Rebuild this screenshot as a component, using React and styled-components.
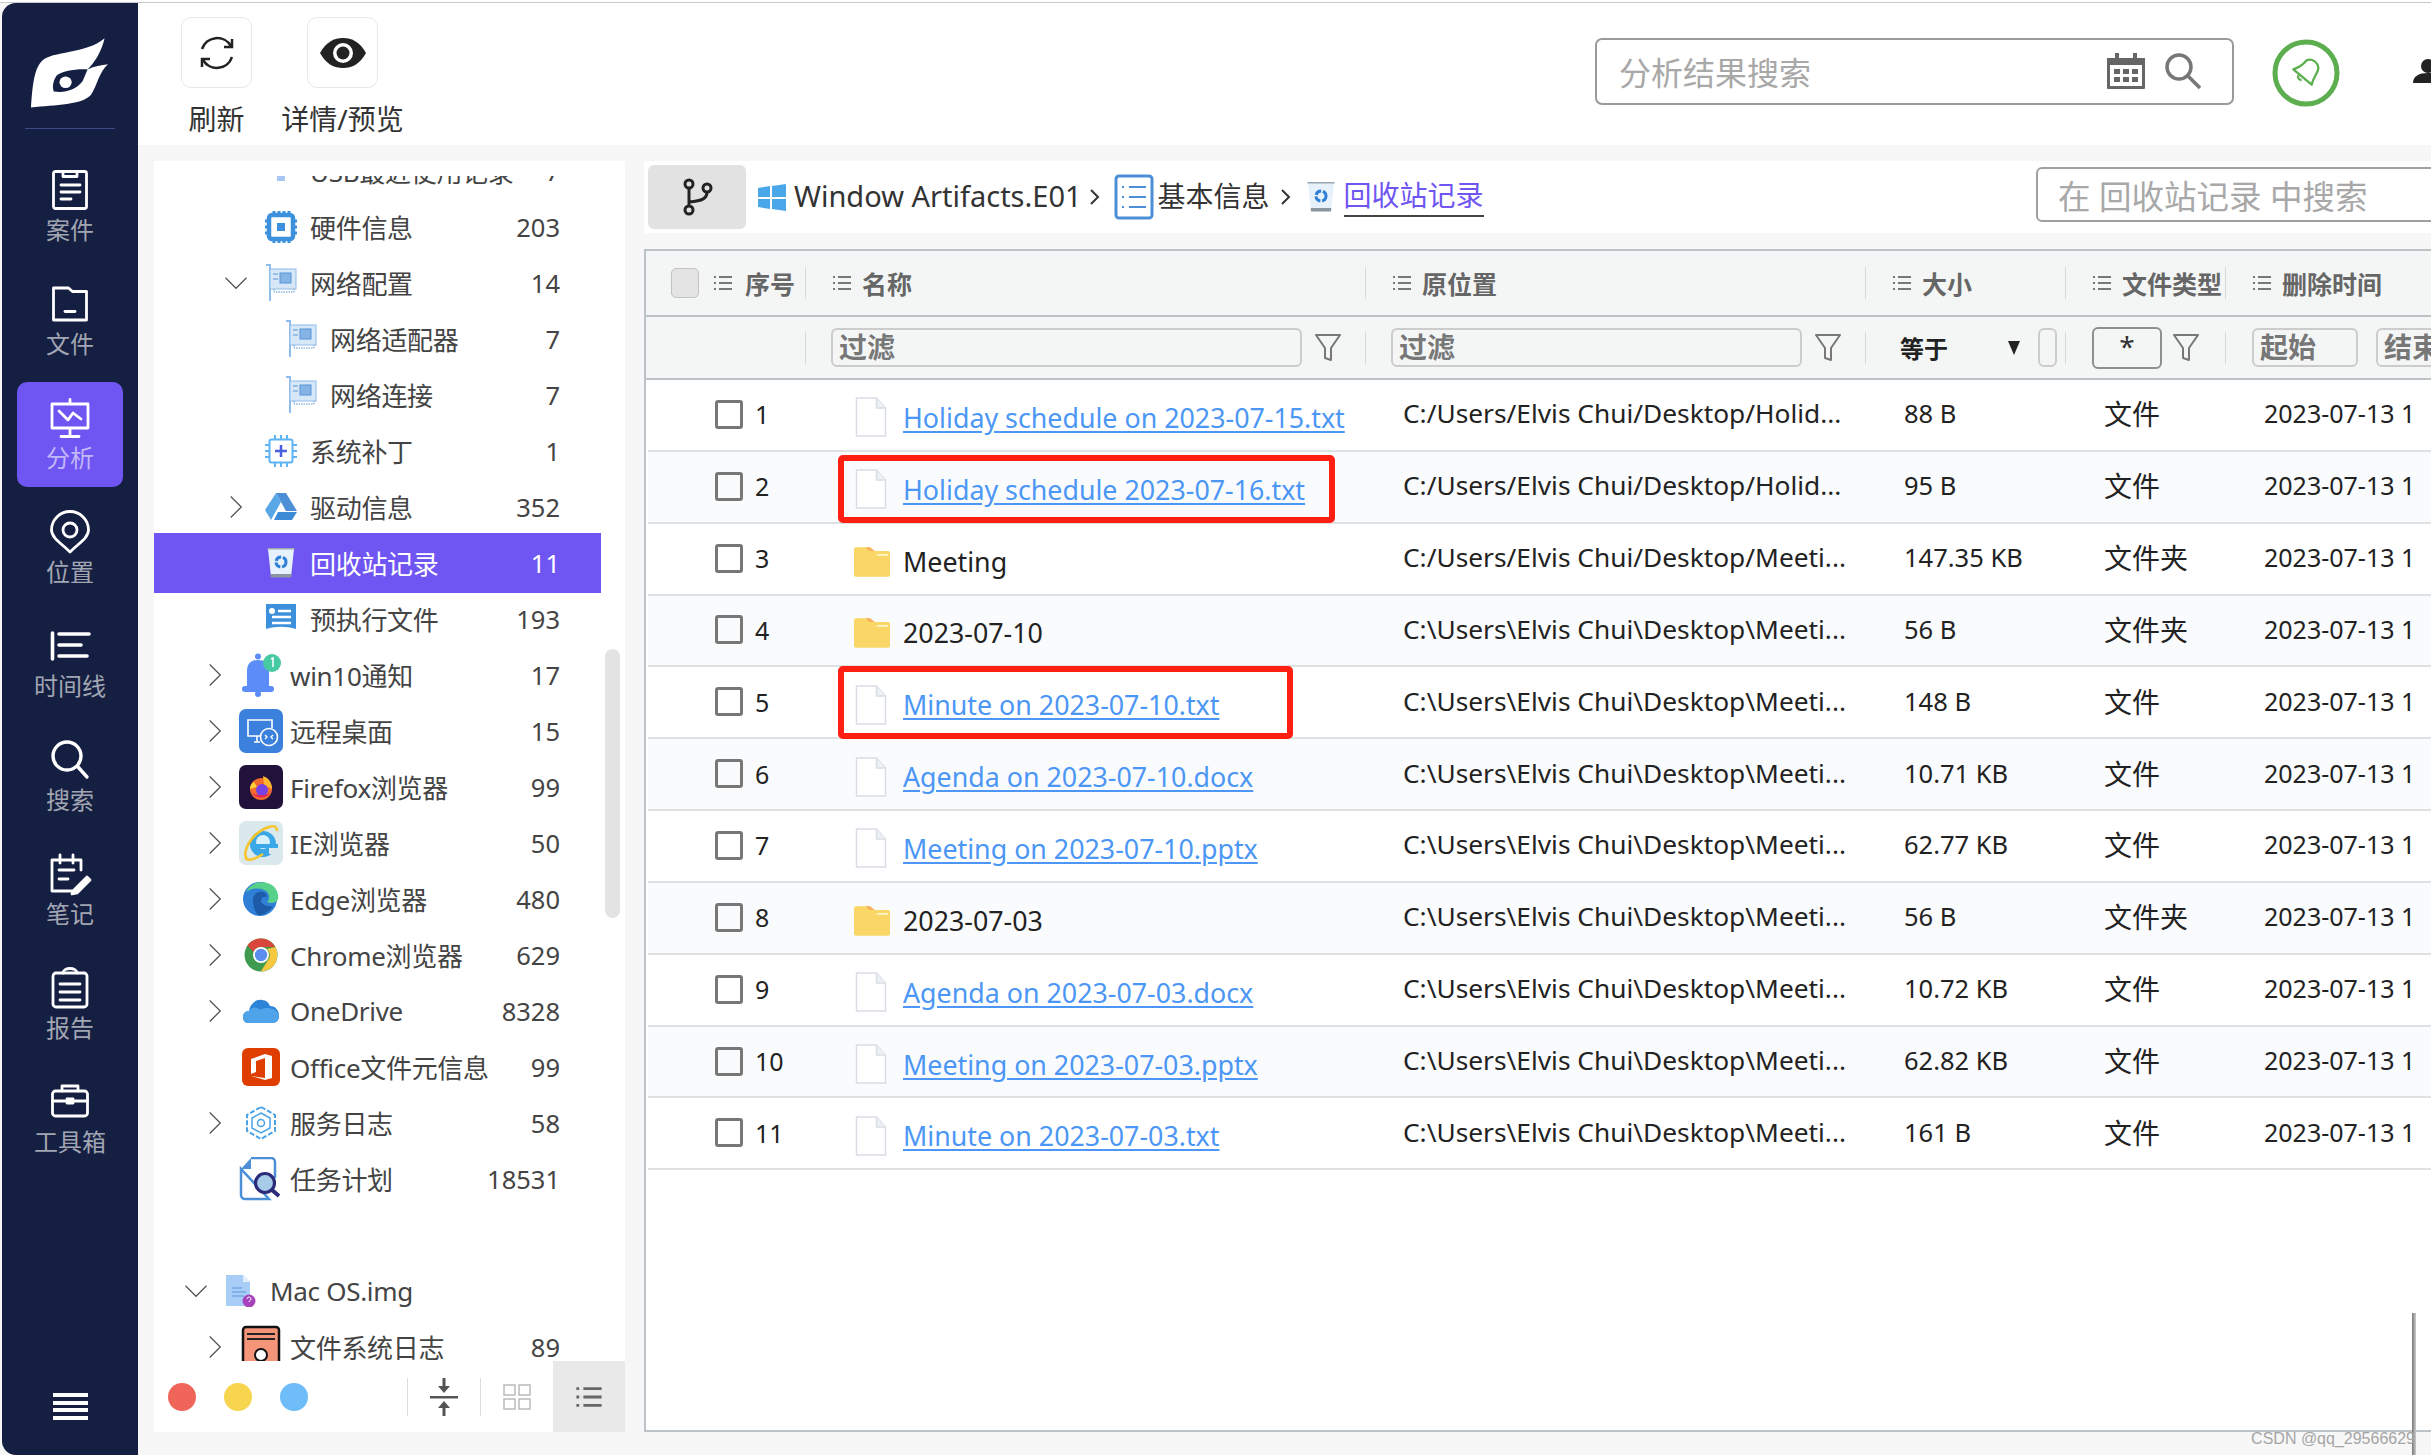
import styled, { createGlobalStyle } from 'styled-components'

const FONT = `"Noto Sans", "Noto Sans CJK SC", sans-serif`

const GlobalStyle = createGlobalStyle`
html, body {
  margin: 0;
  padding: 0;
  background: #f7f7f7;
  overflow: hidden;
}
* { box-sizing: border-box; }
`

const navItems = [
  { label: '案件', icon: 'case' },
  { label: '文件', icon: 'folder' },
  { label: '分析', icon: 'analysis', active: true },
  { label: '位置', icon: 'pin' },
  { label: '时间线', icon: 'timeline' },
  { label: '搜索', icon: 'search' },
  { label: '笔记', icon: 'note' },
  { label: '报告', icon: 'report' },
  { label: '工具箱', icon: 'toolbox' },
]

const treeItems = [
  { label: 'USB最近使用记录', count: 7, level: 2, icon: 'usb' },
  { label: '硬件信息', count: 203, level: 2, icon: 'chip' },
  { label: '网络配置', count: 14, level: 2, icon: 'nic', arrow: 'down' },
  { label: '网络适配器', count: 7, level: 3, icon: 'nic' },
  { label: '网络连接', count: 7, level: 3, icon: 'nic' },
  { label: '系统补丁', count: 1, level: 2, icon: 'patch' },
  { label: '驱动信息', count: 352, level: 2, icon: 'drive', arrow: 'right' },
  { label: '回收站记录', count: 11, level: 2, icon: 'bin', active: true },
  { label: '预执行文件', count: 193, level: 2, icon: 'prefetch' },
  { label: 'win10通知', count: 17, level: 1, icon: 'bell', arrow: 'right' },
  { label: '远程桌面', count: 15, level: 1, icon: 'remote', arrow: 'right' },
  { label: 'Firefox浏览器', count: 99, level: 1, icon: 'firefox', arrow: 'right' },
  { label: 'IE浏览器', count: 50, level: 1, icon: 'ie', arrow: 'right' },
  { label: 'Edge浏览器', count: 480, level: 1, icon: 'edge', arrow: 'right' },
  { label: 'Chrome浏览器', count: 629, level: 1, icon: 'chrome', arrow: 'right' },
  { label: 'OneDrive', count: 8328, level: 1, icon: 'onedrive', arrow: 'right' },
  { label: 'Office文件元信息', count: 99, level: 1, icon: 'office' },
  { label: '服务日志', count: 58, level: 1, icon: 'service', arrow: 'right' },
  { label: '任务计划', count: 18531, level: 1, icon: 'task' },
  { spacer: true },
  { label: 'Mac OS.img', level: 0, icon: 'image', arrow: 'down' },
  { label: '文件系统日志', count: 89, level: 1, icon: 'fslog', arrow: 'right' },
]

const files = [
  { no: 1, name: 'Holiday schedule on 2023-07-15.txt', path: 'C:/Users/Elvis Chui/Desktop/Holid...', size: '88 B', type: '文件', link: true },
  { no: 2, name: 'Holiday schedule 2023-07-16.txt', path: 'C:/Users/Elvis Chui/Desktop/Holid...', size: '95 B', type: '文件', link: true, mark: { width: 497, top: 3, bottom: -1 } },
  { no: 3, name: 'Meeting', path: 'C:/Users/Elvis Chui/Desktop/Meeti...', size: '147.35 KB', type: '文件夹' },
  { no: 4, name: '2023-07-10', path: 'C:\\Users\\Elvis Chui\\Desktop\\Meeti...', size: '56 B', type: '文件夹' },
  { no: 5, name: 'Minute on 2023-07-10.txt', path: 'C:\\Users\\Elvis Chui\\Desktop\\Meeti...', size: '148 B', type: '文件', link: true, mark: { width: 455, top: -1, bottom: -2 } },
  { no: 6, name: 'Agenda on 2023-07-10.docx', path: 'C:\\Users\\Elvis Chui\\Desktop\\Meeti...', size: '10.71 KB', type: '文件', link: true },
  { no: 7, name: 'Meeting on 2023-07-10.pptx', path: 'C:\\Users\\Elvis Chui\\Desktop\\Meeti...', size: '62.77 KB', type: '文件', link: true },
  { no: 8, name: '2023-07-03', path: 'C:\\Users\\Elvis Chui\\Desktop\\Meeti...', size: '56 B', type: '文件夹' },
  { no: 9, name: 'Agenda on 2023-07-03.docx', path: 'C:\\Users\\Elvis Chui\\Desktop\\Meeti...', size: '10.72 KB', type: '文件', link: true },
  { no: 10, name: 'Meeting on 2023-07-03.pptx', path: 'C:\\Users\\Elvis Chui\\Desktop\\Meeti...', size: '62.82 KB', type: '文件', link: true },
  { no: 11, name: 'Minute on 2023-07-03.txt', path: 'C:\\Users\\Elvis Chui\\Desktop\\Meeti...', size: '161 B', type: '文件', link: true },
]

const COLUMNS = '160px 560px 500px 200px 160px 400px'
const INDENT = { 0: 26, 1: 45, 2: 66, 3: 86 }

const Page = styled.div`
position: relative;
width: 2431px;
height: 1455px;
overflow: hidden;
background: #f7f7f7;
font-family: ${FONT};
display: flex;
flex-direction: column;
`
const TopEdge = styled.div`
height: 3px;
flex: none;
background: #c9c9c9;
border-top: 2px solid #fff;
`
const Body = styled.div`
flex: 1;
display: flex;
min-height: 0;
padding-left: 2px;
`
const Sidebar = styled.nav`
width: 136px;
flex: none;
background: #151f42;
border-radius: 14px 0 0 14px;
display: flex;
flex-direction: column;
align-items: center;
position: relative;
`
const LogoBox = styled.div`
width: 90px;
height: 126px;
flex: none;
padding-top: 35px;
border-bottom: 1px solid #3d4a86;
display: flex;
justify-content: center;
align-items: flex-start;
`
const NavList = styled.div`
display: flex;
flex-direction: column;
gap: 9px;
padding-top: 25px;
`
const NavItem = styled.div`
width: 106px;
height: 105px;
border-radius: 10px;
background: ${p => (p.$active ? '#6f55f2' : 'transparent')};
color: ${p => (p.$active ? '#c2b8f8' : '#a2a6b2')};
display: flex;
flex-direction: column;
align-items: center;
justify-content: center;
font-size: 24px;
line-height: 30px;
gap: 3px;
`
const MenuButton = styled.div`
position: absolute;
bottom: 35px;
left: 50%;
margin-left: -17px;
width: 35px;
height: 27px;
display: flex;
flex-direction: column;
justify-content: space-between;
`
const MenuBar = styled.span`
height: 4px;
background: #fff;
`
const Content = styled.div`
flex: 1;
min-width: 0;
display: flex;
flex-direction: column;
`
const Header = styled.header`
height: 142px;
flex: none;
background: #fff;
display: flex;
padding-left: 43px;
position: relative;
`
const ToolGroup = styled.div`
display: flex;
flex-direction: column;
align-items: center;
width: 71px;
margin-left: ${p => p.$left || 0}px;
padding-top: 14px;
font-size: 28px;
line-height: 40px;
color: #333;
gap: 11px;
white-space: nowrap;
`
const ToolButton = styled.div`
width: 71px;
height: 71px;
border: 1px solid #e8e8e8;
border-radius: 10px;
display: flex;
align-items: center;
justify-content: center;
`
const HeaderRight = styled.div`
margin-left: auto;
display: flex;
align-items: center;
height: 136px;
gap: 38px;
width: 836px;
flex: none;
overflow: hidden;
`
const GlobalSearch = styled.div`
width: 639px;
height: 67px;
flex: none;
border: 2px solid #9a9a9a;
border-radius: 7px;
display: flex;
align-items: center;
padding: 0 30px 0 22px;
font-size: 32px;
color: #a8a8a8;
`
const SearchText = styled.span`
flex: 1;
`
const BellBadge = styled.span`
display: flex;
flex: none;
margin-top: 4px;
`
const UserGlyph = styled.span`
display: flex;
flex: none;
margin-left: 35px;
`
const Main = styled.div`
flex: 1;
min-height: 0;
display: flex;
padding: 16px 0 23px 16px;
gap: 20px;
`
const TreePanel = styled.aside`
width: 471px;
flex: none;
background: #fff;
display: flex;
flex-direction: column;
position: relative;
`
const TreeScroll = styled.div`
flex: 1;
min-height: 0;
margin-top: 15px;
overflow: hidden;
`
const TreeInner = styled.div`
margin-top: -33px;
`
const TreeRow = styled.div`
width: 447px;
height: ${p => (p.$active ? 60 : 56)}px;
margin: ${p => (p.$active ? '-2px 0' : '0')};
display: flex;
align-items: center;
padding-left: ${p => INDENT[p.$level]}px;
padding-right: 41px;
font-size: 26px;
letter-spacing: -0.3px;
color: ${p => (p.$active ? '#fff' : '#444')};
background: ${p => (p.$active ? '#6f55f2' : 'transparent')};
`
const TreeArrow = styled.span`
width: 32px;
height: 32px;
flex: none;
display: flex;
align-items: center;
justify-content: center;
`
const TreeIcon = styled.span`
width: ${p => (p.$tile ? 44 : 32)}px;
height: 44px;
margin-left: ${p => (p.$tile ? 8 : 13)}px;
flex: none;
display: flex;
align-items: center;
justify-content: center;
`
const TreeLabel = styled.span`
flex: 1;
margin-left: ${p => (p.$tile ? 7 : 13)}px;
white-space: nowrap;
`
const TreeCount = styled.span`
font-size: 25.5px;
letter-spacing: 0;
`
const ScrollThumb = styled.div`
position: absolute;
left: 451px;
top: 488px;
width: 15px;
height: 269px;
border-radius: 8px;
background: #e3e3e3;
`
const TreeFooter = styled.div`
height: 71px;
flex: none;
display: flex;
align-items: center;
padding-left: 14px;
background: #fff;
`
const Dot = styled.span`
width: 28px;
height: 28px;
border-radius: 50%;
background: ${p => p.$color};
margin-right: 28px;
`
const FooterSep = styled.span`
width: 1px;
height: 38px;
background: #ddd;
margin-left: ${p => p.$left || 0}px;
`
const FooterTool = styled.div`
width: 72px;
height: 71px;
display: flex;
align-items: center;
justify-content: center;
background: ${p => (p.$active ? '#e9e9e9' : 'transparent')};
`
const Pane = styled.div`
width: 1900px;
flex: none;
display: flex;
flex-direction: column;
gap: 16px;
margin-left: -1px;
`
const BreadWrap = styled.div`
position: relative;
`
const Breadcrumb = styled.div`
height: 72px;
flex: none;
background: #fff;
display: flex;
align-items: center;
padding-left: 4px;
font-size: 29px;
color: #333;
`
const BranchButton = styled.div`
width: 98px;
height: 64px;
border-radius: 6px;
background: #e2e2e2;
display: flex;
align-items: center;
justify-content: center;
margin-right: 12px;
`
const CrumbIcon = styled.span`
display: flex;
margin-right: ${p => p.$right || 0}px;
`
const CrumbText = styled.span`
white-space: nowrap;
font-size: ${p => p.$size || 29}px;
margin-bottom: 4px;
`
const CrumbArrow = styled.span`
margin: 0 ${p => p.$right}px 0 ${p => p.$left}px;
display: flex;
`
const CrumbCurrent = styled.span`
color: #6f55f2;
font-size: 28px;
line-height: 36px;
padding-bottom: 2px;
border-bottom: 2px solid #444;
white-space: nowrap;
`
const PaneSearch = styled.div`
position: absolute;
left: 1392px;
top: 6px;
width: 500px;
height: 55px;
border: 2px solid #a0a0a0;
border-radius: 6px;
color: #a8a8a8;
font-size: 32.5px;
padding-left: 20px;
display: flex;
align-items: center;
white-space: pre;
`
const TableBox = styled.div`
flex: 1;
min-height: 0;
background: #fff;
border: 2px solid #bcc2c6;
border-right: 0;
`
const HeadRow = styled.div`
display: grid;
grid-template-columns: ${COLUMNS};
height: 66px;
background: #f4f6f6;
border-bottom: 2px solid #bcc2c6;
align-items: center;
`
const FilterRow = styled(HeadRow)`
height: 63px;
`
const HeadCell = styled.div`
height: 32px;
display: flex;
align-items: center;
border-right: ${p => (p.$last ? 0 : '1px solid #d6dadc')};
padding-left: ${p => p.$pad || 26}px;
font-size: 25px;
font-weight: 700;
color: #666;
white-space: nowrap;
gap: ${p => p.$gap ?? 10}px;
`
const HeadCheck = styled.span`
width: 28px;
height: 30px;
border-radius: 5px;
background: #e4e4e4;
border: 1px solid #c2c2c2;
margin-right: 2px;
flex: none;
`
const FilterCell = styled(HeadCell)`
padding-left: ${p => p.$pad || 25}px;
`
const FilterInput = styled.div`
width: ${p => p.$width}px;
height: 39px;
flex: none;
border: 2px solid #ccc;
border-radius: 6px;
padding-left: 6px;
font-size: 28px;
line-height: 34px;
color: #777;
font-weight: 700;
`
const MiniInput = styled(FilterInput)`
margin-left: 18px;
padding: 0;
`
const StarInput = styled(FilterInput)`
height: 42px;
border-color: #8f8f8f;
padding: 0;
text-align: center;
color: #333;
font-weight: 400;
`
const EqualLabel = styled.span`
color: #222;
font-size: 24px;
width: 108px;
`
const Row = styled.div`
display: grid;
grid-template-columns: ${COLUMNS};
height: 71.85px;
margin-left: 2px;
align-items: center;
background: ${p => (p.$alt ? '#fafbfd' : '#fff')};
border-bottom: 2px solid #dfe2e5;
font-size: 25px;
color: #222;
`
const NoCell = styled.div`
display: flex;
align-items: center;
padding-left: 67px;
gap: 12px;
margin-top: -1px;
`
const CheckBox = styled.span`
width: 28px;
height: 29px;
border: 3px solid #777;
border-radius: 3px;
flex: none;
`
const NameCell = styled.div`
position: relative;
display: flex;
align-items: center;
height: 100%;
padding-left: 47px;
gap: 16px;
padding-top: 5px;
font-size: 26.8px;
white-space: nowrap;
`
const IconSlot = styled.span`
width: 32px;
flex: none;
display: flex;
align-items: center;
margin-left: ${p => (p.$folder ? -1 : 0)}px;
margin-right: ${p => (p.$folder ? 1 : 0)}px;
`
const FileLink = styled.a`
color: #4c97f5;
text-decoration: underline;
text-underline-offset: 3px;
`
const RedMark = styled.span`
position: absolute;
left: 30px;
top: ${p => p.$top}px;
bottom: ${p => p.$bottom}px;
width: ${p => p.$width}px;
border: 6px solid #ff1f12;
border-radius: 5px;
`
const TextCell = styled.div`
padding-left: ${p => p.$pad}px;
font-size: ${p => p.$size}px;
white-space: nowrap;
margin-top: -3px;
`
const Watermark = styled.div`
position: absolute;
right: 16px;
bottom: 7px;
font-family: "Liberation Sans", sans-serif;
font-size: 16px;
color: #a5a5a5;
z-index: 3;
`
const EdgeLine = styled.div`
position: absolute;
left: 2412px;
top: 1313px;
width: 4px;
height: 142px;
background: linear-gradient(90deg, #777, #ccc);
z-index: 2;
`

function NavIcon({ name }) {
  const s = { width: 44, height: 44, viewBox: '0 0 44 44', fill: 'none', stroke: '#fff', strokeWidth: 2.8, strokeLinecap: 'round', strokeLinejoin: 'round' }
  switch (name) {
    case 'case':
      return <svg {...s}><rect x="5.500" y="3.500" width="33" height="37" rx="2" /><path d="M15 3.500v5h14v-5M13 17h19M13 24h19M13 31h10" /></svg>
    case 'folder':
      return <svg {...s}><path d="M5.500 38V6h15l4 3.500h14V38z" /><path d="M17 29.500h10" /></svg>
    case 'analysis':
      return <svg {...s}><path d="M4 8h36v24H4zM22 3.500V8M22 32v8M13 40.500h18" /><path d="M11 15l9 9 5-7 8 6" /></svg>
    case 'pin':
      return <svg {...s}><path d="M22 42C14 34 3.500 28 3.500 20a18.500 18.500 0 0 1 37 0c0 8-10.500 14-18.500 22z" /><circle cx="22" cy="20" r="7" /></svg>
    case 'timeline':
      return <svg {...s} strokeWidth="3.600"><path d="M4.500 9v26M11 10h30M11 21h22M11 32h28" /></svg>
    case 'search':
      return <svg {...s} strokeWidth="3.400"><circle cx="19" cy="18" r="14" /><path d="M30 29l9 10" /></svg>
    case 'note':
      return <svg {...s}><path d="M33 18V8H4v31h20M12 3v8M25 3v8M11 18h15M11 27h9" /><path d="M26 38l13-13 3 3-13 13-5 1z" fill="#fff" /></svg>
    case 'report':
      return <svg {...s}><rect x="5" y="7" width="34" height="34" rx="3" /><path d="M15 7c0-6 14-6 14 0M12 18h20M12 26h20M12 34h20" /></svg>
    default:
      return <svg {...s}><rect x="4.500" y="11" width="35" height="25" rx="3" /><path d="M14 11V6h16v5M4.500 21h35" /><rect x="19" y="19" width="6" height="4" fill="#fff" /></svg>
  }
}

function Logo() {
  return (
    <svg width="78" height="70" viewBox="38 28 230 205">
      <path d="M38 232C42 180 45 120 70 95 100 65 200 75 255 28 245 70 225 100 205 120 225 110 245 108 265 105 240 125 232 170 215 195 190 225 110 225 38 232z" fill="#fff" />
      <path d="M205 120C170 118 125 125 112 140 103 155 100 170 105 185 140 190 170 180 190 155 197 140 200 130 205 120z" fill="#151f42" />
      <ellipse cx="140" cy="158" rx="18" ry="17" fill="#fff" />
    </svg>
  )
}

function Chevron({ dir }) {
  return (
    <svg width="28" height="28" viewBox="0 0 32 32" fill="none" stroke="#555" strokeWidth="1.500">
      {dir === 'down' ? <path d="M4 10l12 12 12-12" /> : <path d="M10 4l12 12-12 12" />}
    </svg>
  )
}

function BinIcon() {
  return (
    <svg width="30" height="30" viewBox="0 0 30 30" fill="none">
      <path d="M2 1h26l-3 28H5z" fill="#e6f1fc" />
      <path d="M1.500 0h27v1.500h-27z" fill="#9aa7b2" />
      <path d="M4.700 26h20.600l-.3 3.500H5z" fill="#8b959d" />
      <circle cx="15" cy="14" r="5" stroke="#2f7fd6" strokeWidth="3" strokeDasharray="6.500 1.800" />
    </svg>
  )
}

function TileIcon({ name }) {
  switch (name) {
    case 'usb':
      return <svg width="28" height="30" viewBox="0 0 28 30"><path d="M1 0h26c0 10-6 14-9 15v10h-8V15C5 14 1 10 1 0z" fill="#a8c8f4" /></svg>
    case 'chip':
      return <svg width="32" height="32" viewBox="0 0 32 32" fill="none"><path d="M9 0v6M14 0v6M19 0v6M24 0v6M9 26v6M14 26v6M19 26v6M24 26v6M0 10h6M0 16h6M0 22h6M26 10h6M26 16h6M26 22h6" stroke="#3d91dc" strokeWidth="3" /><rect x="4" y="4" width="24" height="24" rx="3" stroke="#3d91dc" strokeWidth="4.500" /><rect x="12" y="12" width="8" height="8" fill="#3d91dc" /></svg>
    case 'nic':
      return <svg width="32" height="38" viewBox="0 0 32 38" fill="none"><path d="M1 1h4v36" stroke="#8fbce8" strokeWidth="2" /><rect x="5" y="5" width="26" height="20" fill="#d6e7f8" stroke="#8fbce8" /><rect x="15" y="9" width="11" height="10" fill="#85b4e6" stroke="#5a94d4" /><path d="M8 10h5M8 15h5" stroke="#5a94d4" /><path d="M9 25v3h20v-3" stroke="#5a94d4" strokeDasharray="1.500 1" /></svg>
    case 'patch':
      return <svg width="32" height="32" viewBox="0 0 32 32" fill="none"><path d="M10 0v5M16 0v5M22 0v5M10 27v5M16 27v5M22 27v5M0 10h5M0 16h5M0 22h5M27 10h5M27 16h5M27 22h5" stroke="#5eb4f5" strokeWidth="2" /><rect x="4.500" y="4.500" width="23" height="23" rx="2" stroke="#5eb4f5" strokeWidth="2" /><path d="M16 10v12M10 16h12" stroke="#4a5ee0" strokeWidth="2.500" /></svg>
    case 'drive':
      return <svg width="32" height="28" viewBox="0 0 32 28"><path d="M11 0h10l11 18H21z" fill="#4d8fd6" /><path d="M11 0l5 9L6 27 0 17z" fill="#5aa7e8" /><path d="M9 27l4-8h19l-5 8z" fill="#3d8bd6" /></svg>
    case 'bin':
      return <BinIcon />
    case 'prefetch':
      return <svg width="32" height="32" viewBox="0 0 32 32"><path d="M1 1h30v25c-10-3-20-3-30 0z" fill="#3d91dc" /><circle cx="7" cy="8" r="3" fill="#fff" /><path d="M13 8h13M7 14h19M7 20h19" stroke="#fff" strokeWidth="2.500" /></svg>
    case 'bell':
      return <svg width="44" height="44" viewBox="0 0 44 44"><circle cx="19" cy="3.500" r="3" fill="#5b8cf7" /><path d="M8 34V18C8 10 13 7 19 7s11 3 11 11v16z" fill="#5b8cf7" /><rect x="3" y="33" width="32" height="6" rx="3" fill="#5b8cf7" /><circle cx="19" cy="41" r="3" fill="#5b8cf7" /><circle cx="33" cy="10" r="9" fill="#47c9a3" /><path d="M32 6l2-1v9" stroke="#fff" strokeWidth="1.500" fill="none" /></svg>
    case 'remote':
      return <svg width="44" height="44" viewBox="0 0 44 44" fill="none"><rect width="44" height="44" rx="7" fill="#3a80dc" /><path d="M21 27H9V11h24v8M15 33h6M18 27v6" stroke="#fff" strokeWidth="1.600" /><circle cx="30" cy="28" r="8.500" fill="#3a80dc" stroke="#fff" strokeWidth="1.600" /><path d="M26 26l2 2-2 2M34 26l-2 2 2 2" stroke="#fff" strokeWidth="1.400" /></svg>
    case 'firefox':
      return <svg width="44" height="44" viewBox="0 0 44 44"><rect width="44" height="44" rx="7" fill="#20123a" /><circle cx="22" cy="24" r="11" fill="#f36b2c" /><path d="M24 11c6 2 9 7 9 13l-8-4z" fill="#ffb52e" /><path d="M11 24c0-4 2-6 4-7l3 5z" fill="#ffcf3d" /><circle cx="23" cy="25" r="6" fill="#7543e3" /><path d="M13 28c4 6 14 6 18 0-5 3-13 3-18 0z" fill="#e3245c" /></svg>
    case 'ie':
      return <svg width="44" height="44" viewBox="0 0 44 44" fill="none"><rect width="44" height="44" rx="7" fill="#dbe8ec" /><circle cx="24" cy="23" r="13" fill="#3aa7e8" /><circle cx="24" cy="21" r="7" fill="#d9f1fc" /><rect x="15" y="23" width="24" height="4" fill="#3aa7e8" /><path d="M30 27h9l-3 6h-6z" fill="#dbe8ec" /><path d="M8 38C2 32 12 12 30 6c6-2 8 0 8 4M6 37c4 4 12 0 18-4" stroke="#f5c52a" strokeWidth="2.500" /></svg>
    case 'edge':
      return <svg width="36" height="34" viewBox="0 0 36 34"><circle cx="17" cy="17" r="17" fill="#2f7fd6" /><path d="M3 10C7 1 18-2 27 2c6 3 9 9 8 15-1 4-7 5-11 3 3-3 3-8-1-11C17 5 8 6 3 10z" fill="#57d08a" /><path d="M10 18c0-6 5-9 10-8 3 1 4 3 4 5-4-1-6 1-6 4s5 6 12 5c-4 6-11 10-15 9-3-3-5-9-5-15z" fill="#1d5aa8" /></svg>
    case 'chrome':
      return <svg width="34" height="34" viewBox="0 0 34 34"><circle cx="17" cy="17" r="16.500" fill="#3e9a4e" /><path d="M17 .5A16.500 16.500 0 0 1 31.300 9H17a8 8 0 0 0-7.500 5L3.500 7.500A16.500 16.500 0 0 1 17 .5z" fill="#d9473c" /><path d="M31.300 9a16.500 16.500 0 0 1-14.500 24.500l7-11A8 8 0 0 0 23 11z" fill="#f6c840" /><circle cx="17" cy="17" r="8" fill="#fff" /><circle cx="17" cy="17" r="6.200" fill="#5b8df0" /></svg>
    case 'onedrive':
      return <svg width="36" height="24" viewBox="0 0 36 24"><path d="M5 24C1 24 0 20 0 18c0-4 3-6 6-6 1-7 7-12 13-11 4 0 7 3 8 6 6 0 9 5 9 10 0 4-3 7-6 7z" fill="#2b84d8" /><path d="M5 24c-4 0-5-4-5-6 0-4 3-6 6-6 3-5 9-4 11-1 5-4 18-2 19 6 0 4-3 7-6 7z" fill="#4fa3e8" /></svg>
    case 'office':
      return <svg width="38" height="38" viewBox="0 0 38 38"><rect width="38" height="38" rx="6" fill="#e03d00" /><path d="M9 11l14-5 7 2v22l-7 2-14-4 14 2V10l-9 3v11l-5 2z" fill="#fff" /></svg>
    case 'service':
      return <svg width="32" height="34" viewBox="0 0 32 34" fill="none" stroke="#4aa3e6"><path d="M16 1l14 8v16l-14 8-14-8V9z" strokeWidth="2" strokeDasharray="5 2" /><path d="M16 7l9 5v10l-9 5-9-5V12z" strokeWidth="1.500" /><circle cx="16" cy="17" r="3.500" strokeWidth="1.500" /></svg>
    case 'task':
      return <svg width="44" height="44" viewBox="0 0 44 44" fill="none"><path d="M12 1h20a4 4 0 0 1 4 4v16M30 42H6a4 4 0 0 1-4-4V12z" stroke="#4d8fd6" strokeWidth="2.500" /><path d="M12 1L2 12h10z" fill="#4d8fd6" /><circle cx="26" cy="26" r="9.500" fill="#a9cbea" stroke="#2b2b7a" strokeWidth="3.200" /><path d="M33 33l7 6" stroke="#2b2b7a" strokeWidth="4" /></svg>
    case 'image':
      return <svg width="30" height="32" viewBox="0 0 30 32"><path d="M0 0h17l7 7v24H0z" fill="#a8cdf6" /><path d="M17 0l7 7h-7z" fill="#e3effb" /><path d="M6 13h10M6 17h14M6 21h12" stroke="#5f97db" /><circle cx="23" cy="26" r="6.500" fill="#a742bd" /><path d="M21 24c0-2.500 4-2.500 4 0 0 1.500-2 1.500-2 3" stroke="#fff" fill="none" /></svg>
    default:
      return <svg width="40" height="44" viewBox="0 0 40 44" fill="none"><rect x="2" y="2" width="36" height="42" rx="3" fill="#f4957a" stroke="#111" strokeWidth="2.500" /><path d="M6 9h28M6 14h28" stroke="#222" strokeWidth="2" /><circle cx="20" cy="30" r="6" fill="#fff" stroke="#111" strokeWidth="2" /></svg>
  }
}

function TreeEntry({ item }) {
  if (item.spacer) return <TreeRow $level={0} />
  const tile = item.level === 1
  return (
    <TreeRow $level={item.level} $active={item.active}>
      <TreeArrow>{item.arrow && <Chevron dir={item.arrow} />}</TreeArrow>
      <TreeIcon $tile={tile}><TileIcon name={item.icon} /></TreeIcon>
      <TreeLabel $tile={tile}>{item.label}</TreeLabel>
      <TreeCount>{item.count}</TreeCount>
    </TreeRow>
  )
}

function FileIcon({ folder }) {
  if (folder) {
    return (
      <svg width="36" height="31" viewBox="0 0 38 32" style={{ flex: 'none' }}>
        <path d="M0 3a2 2 0 0 1 2-2h14l5 4h15a2 2 0 0 1 2 2v23a2 2 0 0 1-2 2H2a2 2 0 0 1-2-2z" fill="#fad666" />
        <path d="M12 1h5l5 4h-6z" fill="#f5b25c" />
        <path d="M24 8h12v2H24z" fill="#fff3c4" />
      </svg>
    )
  }
  return (
    <svg width="32" height="40" viewBox="0 0 32 40" fill="#fff" stroke="#d9dee4" strokeWidth="1.500">
      <path d="M1.500 1h20l9 10v28h-29z" />
      <path d="M21.500 1v10h9" fill="#eef1f4" />
    </svg>
  )
}

function ListGlyph({ size = 20, color = '#777' }) {
  return (
    <svg width={size} height={size} viewBox="0 0 20 20" fill="none" stroke={color} strokeWidth="2">
      <path d="M1 4h2M6 4h13M1 10h2M6 10h13M1 16h2M6 16h13" />
    </svg>
  )
}

function Funnel() {
  return (
    <svg width="26" height="28" viewBox="0 0 26 28" fill="none" stroke="#777" strokeWidth="2">
      <path d="M1 1h24l-9 13v12l-6-2V14z" strokeLinejoin="round" />
    </svg>
  )
}

function App() {
  return (
    <Page>
      <GlobalStyle />
      <TopEdge />
      <Body>
        <Sidebar>
          <LogoBox><Logo /></LogoBox>
          <NavList>
            {navItems.map(item => (
              <NavItem key={item.label} $active={item.active}>
                <NavIcon name={item.icon} />
                {item.label}
              </NavItem>
            ))}
          </NavList>
          <MenuButton>
            <MenuBar /><MenuBar /><MenuBar /><MenuBar />
          </MenuButton>
        </Sidebar>
        <Content>
          <Header>
            <ToolGroup>
              <ToolButton>
                <svg width="38" height="38" viewBox="0 0 38 38" fill="none" stroke="#222" strokeWidth="2.500">
                  <path d="M4 15A16 16 0 0 1 33 12M34 23A16 16 0 0 1 5 26" />
                  <path d="M34 5v8h-8M4 33v-8h8" />
                </svg>
              </ToolButton>
              刷新
            </ToolGroup>
            <ToolGroup $left={55}>
              <ToolButton>
                <svg width="46" height="32" viewBox="0 0 46 32">
                  <path d="M0 16C6 5 14 1 23 1s17 4 23 15c-6 11-14 15-23 15S6 27 0 16z" fill="#222" />
                  <circle cx="23" cy="16" r="10" fill="#fff" />
                  <circle cx="23" cy="16" r="6.500" fill="#222" />
                </svg>
              </ToolButton>
              详情/预览
            </ToolGroup>
            <HeaderRight>
              <GlobalSearch>
                <SearchText>分析结果搜索</SearchText>
                <svg width="40" height="38" viewBox="0 0 40 38" style={{ marginRight: 18 }}>
                  <path d="M1 6h38v30a1 1 0 0 1-1 1H2a1 1 0 0 1-1-1z" fill="#666" />
                  <rect x="4" y="13" width="32" height="21" fill="#fff" />
                  <path d="M9 1h4v6H9zM27 1h4v6h-4z" fill="#666" />
                  <path d="M8 17h6v5H8zM17 17h6v5h-6zM26 17h6v5h-6zM8 25h6v5H8zM17 25h6v5h-6zM26 25h6v5h-6z" fill="#666" />
                </svg>
                <svg width="38" height="38" viewBox="0 0 38 38" fill="none" stroke="#777" strokeWidth="3.500">
                  <circle cx="15" cy="15" r="12" />
                  <path d="M24 24l12 12" />
                </svg>
              </GlobalSearch>
              <BellBadge>
                <svg width="68" height="68" viewBox="21 21 204 204" fill="none">
                  <circle cx="123" cy="123" r="93" stroke="#5cae4e" strokeWidth="15" />
                  <path d="M85 112C100 108 115 97 125 85 140 78 160 90 160 110 158 125 145 135 140 158zM100 130c-3 8 2 14 10 14" stroke="#5cae4e" strokeWidth="7" strokeLinejoin="round" />
                </svg>
              </BellBadge>
              <UserGlyph>
                <svg width="30" height="24" viewBox="0 0 30 24">
                  <circle cx="15" cy="7" r="7" fill="#222" />
                  <path d="M0 24c0-7 6-10 15-10s15 3 15 10z" fill="#222" />
                </svg>
              </UserGlyph>
            </HeaderRight>
          </Header>
          <Main>
            <TreePanel>
              <TreeScroll>
                <TreeInner>
                  {treeItems.map((item, i) => <TreeEntry key={i} item={item} />)}
                </TreeInner>
              </TreeScroll>
              <ScrollThumb />
              <TreeFooter>
                <Dot $color="#f0655a" />
                <Dot $color="#f7d54e" />
                <Dot $color="#6ebcf8" />
                <FooterSep $left={71} />
                <FooterTool>
                  <svg width="28" height="38" viewBox="0 0 28 38" fill="#555">
                    <path d="M0 18h28v2.500H0zM12.500 0h3v8H20l-6 7-6-7h4.500zM14 23l6 7h-4.500v8h-3v-8H8z" />
                  </svg>
                </FooterTool>
                <FooterSep />
                <FooterTool>
                  <svg width="28" height="26" viewBox="0 0 28 26" fill="none" stroke="#bbb" strokeWidth="1.500">
                    <rect x="1" y="1" width="11" height="10" /><rect x="16" y="1" width="11" height="10" />
                    <rect x="1" y="15" width="11" height="10" /><rect x="16" y="15" width="11" height="10" />
                  </svg>
                </FooterTool>
                <FooterTool $active>
                  <ListGlyph size={28} color="#666" />
                </FooterTool>
              </TreeFooter>
            </TreePanel>
            <Pane>
              <BreadWrap>
                <Breadcrumb>
                  <BranchButton>
                    <svg width="34" height="38" viewBox="0 0 34 38" fill="none" stroke="#222" strokeWidth="3">
                      <circle cx="9" cy="6" r="4" /><circle cx="9" cy="32" r="4" /><circle cx="27" cy="10" r="4" />
                      <path d="M9 10v18M9 24c14-1 18-4 18-10" />
                    </svg>
                  </BranchButton>
                  <CrumbIcon $right={8}>
                    <svg width="28" height="27" viewBox="0 0 28 27" fill="#4aa8ea">
                      <path d="M0 4l12-2v11H0zM14 2l14-2v13H14zM0 15h12v10L0 23zM14 15h14v12l-14-2z" />
                    </svg>
                  </CrumbIcon>
                  <CrumbText>Window Artifacts.E01</CrumbText>
                  <CrumbArrow $left={7} $right={14}>
                    <svg width="11" height="18" viewBox="0 0 11 18" fill="none" stroke="#333" strokeWidth="2"><path d="M2 2l7 7-7 7" /></svg>
                  </CrumbArrow>
                  <CrumbIcon $right={4}>
                    <svg width="40" height="46" viewBox="0 0 40 46" fill="none">
                      <rect x="2" y="2" width="36" height="42" rx="3" stroke="#4d8fd6" strokeWidth="3" />
                      <path d="M8 13h2M15 13h17M8 23h2M15 23h17M8 33h2M15 33h17" stroke="#4d8fd6" strokeWidth="2" />
                    </svg>
                  </CrumbIcon>
                  <CrumbText $size={28}>基本信息</CrumbText>
                  <CrumbArrow $left={10} $right={15}>
                    <svg width="11" height="18" viewBox="0 0 11 18" fill="none" stroke="#333" strokeWidth="2"><path d="M2 2l7 7-7 7" /></svg>
                  </CrumbArrow>
                  <CrumbIcon $right={8}><BinIcon /></CrumbIcon>
                  <CrumbCurrent>回收站记录</CrumbCurrent>
                </Breadcrumb>
                <PaneSearch>在 回收站记录 中搜索</PaneSearch>
              </BreadWrap>
              <TableBox>
                <HeadRow>
                  <HeadCell $pad={25} $gap={12}><HeadCheck /><ListGlyph />序号</HeadCell>
                  <HeadCell><ListGlyph />名称</HeadCell>
                  <HeadCell><ListGlyph />原位置</HeadCell>
                  <HeadCell><ListGlyph />大小</HeadCell>
                  <HeadCell><ListGlyph />文件类型</HeadCell>
                  <HeadCell $last><ListGlyph />删除时间</HeadCell>
                </HeadRow>
                <FilterRow>
                  <FilterCell />
                  <FilterCell $gap={13}><FilterInput $width={471}>过滤</FilterInput><Funnel /></FilterCell>
                  <FilterCell $gap={13}><FilterInput $width={411}>过滤</FilterInput><Funnel /></FilterCell>
                  <FilterCell $pad={34} $gap={0}>
                    <EqualLabel>等于</EqualLabel>
                    <svg width="12" height="14" viewBox="0 0 12 14" fill="#222"><path d="M0 0h12L6 14z" /></svg>
                    <MiniInput $width={19} />
                  </FilterCell>
                  <FilterCell $pad={26} $gap={11}><StarInput $width={70}>*</StarInput><Funnel /></FilterCell>
                  <FilterCell $last $pad={26} $gap={18}><FilterInput $width={106}>起始</FilterInput><FilterInput $width={106}>结束</FilterInput></FilterCell>
                </FilterRow>
                {files.map((f, i) => (
                  <Row key={f.no} $alt={i % 2 === 1}>
                    <NoCell><CheckBox />{f.no}</NoCell>
                    <NameCell>
                      <IconSlot $folder={!f.link}><FileIcon folder={!f.link} /></IconSlot>
                      {f.link ? <FileLink>{f.name}</FileLink> : <span>{f.name}</span>}
                      {f.mark && <RedMark $width={f.mark.width} $top={f.mark.top} $bottom={f.mark.bottom} />}
                    </NameCell>
                    <TextCell $pad={35} $size={26.3}>{f.path}</TextCell>
                    <TextCell $pad={36} $size={25.5}>{f.size}</TextCell>
                    <TextCell $pad={36} $size={28}>{f.type}</TextCell>
                    <TextCell $pad={36} $size={25}>2023-07-13 1</TextCell>
                  </Row>
                ))}
              </TableBox>
            </Pane>
          </Main>
        </Content>
      </Body>
      <EdgeLine />
      <Watermark>CSDN @qq_29566629</Watermark>
    </Page>
  )
}

export default App
